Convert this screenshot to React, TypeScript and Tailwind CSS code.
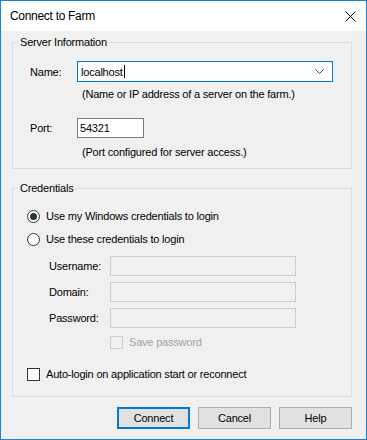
import React from "react";

const font = { fontFamily: '"Liberation Sans", Arial, sans-serif' };

const Radio: React.FC<{ checked?: boolean; label: string }> = ({ checked, label }) => {
  return (
    <div className="flex items-center h-[14px]">
      <span className="w-[13px] h-[13px] rounded-full border border-[#333333] bg-white flex items-center justify-center">
        {checked && <span className="w-[7px] h-[7px] rounded-full bg-[#333333]" />}
      </span>
      <span className="ml-[6px]">{label}</span>
    </div>
  );
};

const CredRow: React.FC<{ label: string; mt: string }> = ({ label, mt }) => {
  return (
    <div className={`flex items-center ${mt}`}>
      <span className="w-[61px] pl-[22px] box-content">{label}</span>
      <div className="w-[186px] h-[20px] border border-[#cccccc] bg-[#f0f0f0]" />
    </div>
  );
};

const App: React.FC = () => {
  return (
    <div
      className="w-[367px] h-[440px] border border-[#1883d7] flex flex-col text-[11px] tracking-[-0.2px] leading-[14px] text-black overflow-hidden"
      style={font}
    >
      {/* Title bar */}
      <div className="h-[30px] bg-white flex items-center justify-between pl-[9px] pr-[10px]">
        <span className="text-[12px] tracking-[-0.3px]">Connect to Farm</span>
        <svg width="11" height="11" viewBox="0 0 11 11">
          <path d="M0.5 0.5 L10.5 10.5 M10.5 0.5 L0.5 10.5" stroke="#000" strokeWidth="1" />
        </svg>
      </div>

      {/* Body */}
      <div className="flex-1 bg-[#f0f0f0] pl-[11px]">
        {/* Server Information */}
        <fieldset className="w-[340px] mt-[4px] border border-[#dcdcdc] pb-[9px]">
          <legend className="ml-[5px] px-[2px] leading-[14px]">Server Information</legend>

          <div className="pl-[17px]">
            <div className="flex items-center mt-[12px]">
              <span className="w-[47px]">Name:</span>
              <div className="w-[256px] h-[21px] border border-[#0078d7] bg-white flex items-center justify-between pl-[3px] pr-[8px]">
                <span className="flex items-center">
                  localhost<span className="w-[1px] h-[13px] bg-black ml-[1px]" />
                </span>
                <svg width="9" height="5" viewBox="0 0 9 5">
                  <path d="M0.5 0.5 L4.5 4.5 L8.5 0.5" fill="none" stroke="#444" strokeWidth="1" />
                </svg>
              </div>
            </div>
            <div className="pl-[52px] mt-[5px]">(Name or IP address of a server on the farm.)</div>

            <div className="flex items-center mt-[17px]">
              <span className="w-[47px]">Port:</span>
              <div className="w-[67px] h-[20px] border border-[#7a7a7a] bg-white flex items-center pl-[2px]">
                54321
              </div>
            </div>
            <div className="pl-[52px] mt-[7px]">(Port configured for server access.)</div>
          </div>
        </fieldset>

        {/* Credentials */}
        <fieldset className="w-[340px] mt-[12px] border border-[#dcdcdc] pb-[15px]">
          <legend className="ml-[5px] px-[2px] leading-[14px]">Credentials</legend>

          <div className="pl-[14px]">
            <div className="mt-[14px]">
              <Radio checked label="Use my Windows credentials to login" />
            </div>
            <div className="mt-[9px]">
              <Radio label="Use these credentials to login" />
            </div>

            <CredRow label="Username:" mt="mt-[10px]" />
            <CredRow label="Domain:" mt="mt-[6px]" />
            <CredRow label="Password:" mt="mt-[6px]" />

            <div className="flex items-center mt-[7px] pl-[83px]">
              <span className="w-[13px] h-[13px] border border-[#cccccc] bg-[#f0f0f0]" />
              <span className="ml-[6px] text-[#a0a0a0]">Save password</span>
            </div>

            <div className="flex items-center mt-[18px]">
              <span className="w-[13px] h-[13px] border border-[#333333] bg-white" />
              <span className="ml-[6px]">Auto-login on application start or reconnect</span>
            </div>
          </div>
        </fieldset>

        {/* Buttons */}
        <div className="w-[340px] flex justify-end gap-[8px] mt-[10px]">
          <button className="w-[73px] h-[22px] border-2 border-[#0078d7] bg-[#e1e1e1]">Connect</button>
          <button className="w-[73px] h-[22px] border border-[#adadad] bg-[#e1e1e1]">Cancel</button>
          <button className="w-[73px] h-[22px] border border-[#adadad] bg-[#e1e1e1]">Help</button>
        </div>
      </div>
    </div>
  );
};

export default App;
